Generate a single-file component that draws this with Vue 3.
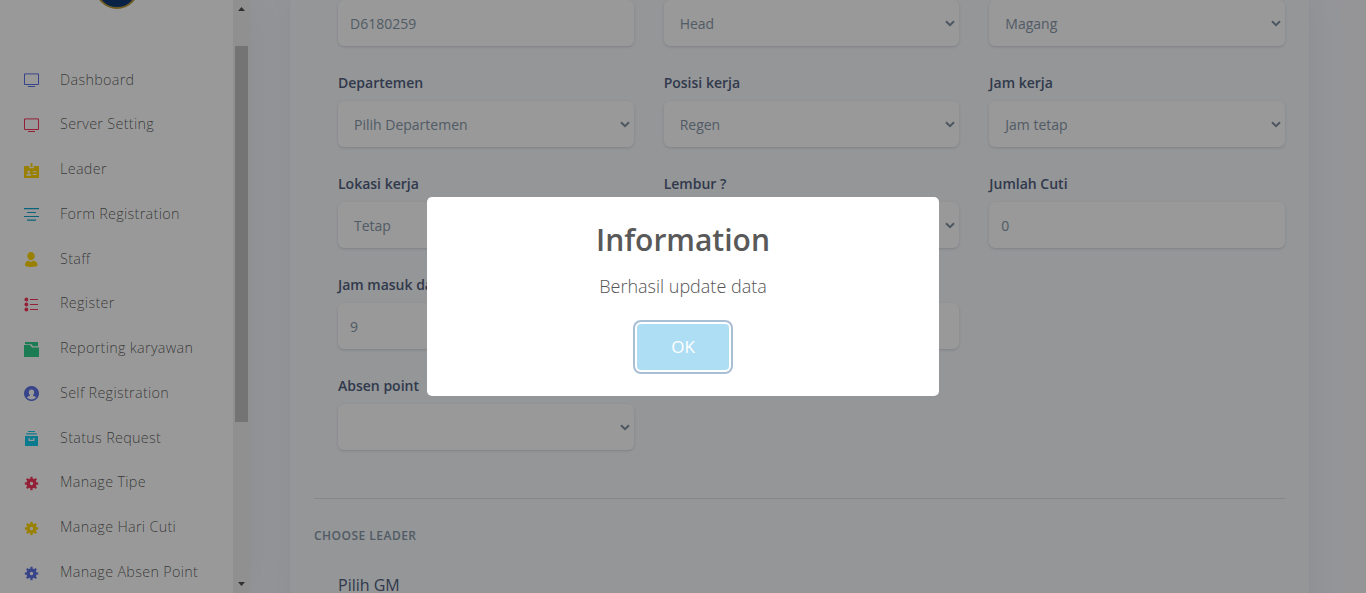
<script setup>
const menu = [
  { label: 'Dashboard', icon: 'tv', color: '#5e72e4' },
  { label: 'Server Setting', icon: 'tv', color: '#f5365c' },
  { label: 'Leader', icon: 'badge', color: '#ffd600' },
  { label: 'Form Registration', icon: 'lines', color: '#11a4cf' },
  { label: 'Staff', icon: 'person', color: '#ffd600' },
  { label: 'Register', icon: 'bullets', color: '#f5365c' },
  { label: 'Reporting karyawan', icon: 'folder', color: '#2dce89' },
  { label: 'Self Registration', icon: 'user', color: '#5e72e4' },
  { label: 'Status Request', icon: 'archive', color: '#11cdef' },
  { label: 'Manage Tipe', icon: 'gear', color: '#f5365c' },
  { label: 'Manage Hari Cuti', icon: 'gear', color: '#ffd600' },
  { label: 'Manage Absen Point', icon: 'gear', color: '#5e72e4' },
]

const rows = [
  [
    { label: '', value: 'D6180259' },
    { label: '', value: 'Head', select: true },
    { label: '', value: 'Magang', select: true },
  ],
  [
    { label: 'Departemen', value: 'Pilih Departemen', select: true },
    { label: 'Posisi kerja', value: 'Regen', select: true },
    { label: 'Jam kerja', value: 'Jam tetap', select: true },
  ],
  [
    { label: 'Lokasi kerja', value: 'Tetap', select: true },
    { label: 'Lembur ?', value: '', select: true },
    { label: 'Jumlah Cuti', value: '0' },
  ],
  [
    { label: 'Jam masuk dan', value: '9' },
    { label: '', value: '' },
  ],
  [{ label: 'Absen point', value: '', select: true }],
]
</script>

<template>
  <div class="page">
    <aside class="sidebar">
      <div class="side-main">
        <div class="brand"><div class="logo"></div></div>
        <nav class="nav">
          <a v-for="item in menu" :key="item.label" class="nav-link">
            <svg class="icon" width="15" height="15" viewBox="0 0 15 15" :style="{ color: item.color }">
              <g v-if="item.icon === 'tv'">
                <path d="M.5 .9h14v10.6H.5z" fill="none" stroke="currentColor" />
                <path d="M4 13.5h7" stroke="currentColor" />
              </g>
              <path v-else-if="item.icon === 'badge'" fill="currentColor" fill-rule="evenodd"
                d="M6.6 0h1.8v4H6.6zM0 3h5.3v2.2h4.4V3H15v12H0zM4.8 7.6a1.3 1.3 0 1 0 .01 0zM2.3 12.7h5c0-1.4-.9-2-2.5-2s-2.5.6-2.5 2zM8.6 8.2v1.1h4V8.2zM8.6 11v1.1h4V11z" />
              <path v-else-if="item.icon === 'lines'" d="M0 1.7h15M3 5.5h9M0 9.5h15M3 13.2h9" stroke="currentColor" stroke-width="1.2" />
              <path v-else-if="item.icon === 'person'" fill="currentColor"
                d="M7 0a3.7 4 0 0 1 3.7 4.1C10.7 6.6 9 8.2 7 8.2S3.3 6.6 3.3 4.1A3.7 4 0 0 1 7 0zM1 13c0-2.7 1.6-4 3.7-4.2L7 9.9l2.3-1.1c2.1.2 4.2 1.5 4.2 4.2 0 1.2-2 2-6.400 2S1 14.2 1 13z" />
              <g v-else-if="item.icon === 'bullets'" fill="currentColor">
                <circle cx="2.4" cy="2.5" r="1.9" /><circle cx="2.4" cy="7.5" r="1.9" /><circle cx="2.4" cy="12.5" r="1.9" />
                <path d="M6 2h8v1H6zM6 7h8v1H6zM6 12h8v1H6z" />
              </g>
              <path v-else-if="item.icon === 'folder'" fill="currentColor"
                d="M1 0h13v4.2H9L7.5 2.2H1zM0 3h6l2 2.6h7V15H0z" />
              <path v-else-if="item.icon === 'user'" fill="currentColor" fill-rule="evenodd"
                d="M7.5 0a7.5 7.5 0 1 0 .01 0zM7.5 3.5A2.7 2.9 0 0 1 10.2 6.4c0 1.2-.5 2-1.2 2.6v.8c1.4.3 2.4.8 3 1.7-1.1 1.3-2.7 2-4.5 2s-3.4-.7-4.5-2c.6-.9 1.6-1.4 3-1.7V9C5.3 8.4 4.8 7.6 4.8 6.4A2.7 2.9 0 0 1 7.5 3.5z" />
              <path v-else-if="item.icon === 'archive'" fill="currentColor" fill-rule="evenodd"
                d="M4 0h7v1.1H4zM2.2 2.3h10.6v1.2H2.2zM1 5h13v10H1zM4.5 7v3h6V7H9.3v1.700H5.7V7z" />
              <g v-else>
                <circle cx="7.5" cy="7.5" r="3.4" fill="none" stroke="currentColor" stroke-width="3.4" />
                <path v-for="n in 8" :key="n" d="M6.4 .8h2.2v3H6.4z" fill="currentColor" :transform="`rotate(${n * 45} 7.5 7.5)`" />
              </g>
            </svg>
            <span>{{ item.label }}</span>
          </a>
        </nav>
      </div>
      <div class="scrollbar">
        <svg width="7" height="4" viewBox="0 0 7 4"><path d="M0 4 3.5 0 7 4z" fill="#505050" /></svg>
        <div class="track"><div class="thumb"></div></div>
        <svg width="7" height="4" viewBox="0 0 7 4"><path d="M0 0 3.5 4 7 0z" fill="#505050" /></svg>
      </div>
    </aside>

    <main class="content">
      <section class="card">
        <div class="form">
          <div v-for="(row, r) in rows" :key="r" class="row">
            <div v-for="(field, f) in row" :key="f" class="field">
              <label v-if="r > 0">{{ field.label }}</label>
              <div class="control" :class="{ select: field.select }">
                <span>{{ field.value }}</span>
                <svg v-if="field.select" width="10" height="7" viewBox="0 0 10 7">
                  <path d="M1 1.2 5 5.2 9 1.2" fill="none" stroke="currentColor" stroke-width="2" />
                </svg>
              </div>
            </div>
          </div>
        </div>
        <hr />
        <h6>CHOOSE LEADER</h6>
        <div class="gm">Pilih GM</div>
      </section>
    </main>

    <div class="backdrop">
      <div class="modal">
        <h2>Information</h2>
        <p>Berhasil update data</p>
        <button>OK</button>
      </div>
    </div>
  </div>
</template>

<style>
body { margin: 0; overflow: hidden; }
</style>

<style scoped>
.page {
  position: relative;
  display: flex;
  width: 1366px;
  height: 593px;
  overflow: hidden;
  background: #f8f9fe;
  font-family: "Open Sans", sans-serif;
  box-sizing: border-box;
}
.page * { box-sizing: border-box; }
.sidebar {
  display: flex;
  flex: none;
  width: 250px;
  height: 593px;
  background: #fff;
  box-shadow: 0 0 32px rgba(136, 152, 170, .15);
  z-index: 1;
}
.side-main { width: 233px; overflow: hidden; }
.brand { display: flex; height: 56.72px; }
.logo {
  width: 44px;
  height: 44px;
  margin: -35px 0 0 95px;
  border: 2px solid #b8983a;
  border-radius: 50%;
  background: #103a74;
}
.nav-link {
  display: flex;
  align-items: center;
  height: 44.78px;
  padding-left: 24px;
  font-size: 14.4px;
  font-weight: 300;
  letter-spacing: .3px;
  color: rgba(0, 0, 0, .65);
  white-space: nowrap;
}
.icon { flex: none; margin: 3px 21px 0 0; }
.scrollbar {
  display: flex;
  flex-direction: column;
  align-items: center;
  width: 17px;
  padding: 7px 0;
  background: #f1f1f1;
}
.track { flex: 1; width: 13px; }
.thumb { height: 376px; margin-top: 35px; background: #c1c1c1; }
.content { flex: 1; padding: 0 57px 0 40px; }
.card {
  height: 620px;
  padding: 0 24px;
  background: #f7fafc;
  box-shadow: 0 0 32px rgba(136, 152, 170, .15), 0 0 1px rgba(50, 50, 93, .08);
}
.form { padding-left: 24px; height: 498px; }
.row {
  display: grid;
  grid-template-columns: repeat(3, 1fr);
  column-gap: 30px;
  height: 101px;
  align-items: end;
}
.row:first-child { height: 46px; }
.field label {
  display: block;
  height: 29px;
  font-size: 14px;
  font-weight: 600;
  line-height: 21px;
  color: #525f7f;
  white-space: nowrap;
}
.control {
  display: flex;
  align-items: center;
  justify-content: space-between;
  height: 46px;
  padding: 0 4px 0 12px;
  border-radius: 6px;
  background: #fff;
  box-shadow: 0 1px 3px rgba(50, 50, 93, .15), 0 1px 0 rgba(0, 0, 0, .02);
  font-size: 14px;
  color: #8898aa;
}
.control.select { padding-left: 16px; }
.control svg { color: #8090a2; }
hr { height: 1px; margin: 0; border: 0; background: #dfe2e4; }
h6 {
  margin: 28px 0 0;
  font-size: 12px;
  line-height: 18px;
  font-weight: 600;
  letter-spacing: .48px;
  color: #8898aa;
}
.gm { margin: 28px 0 0 24px; font-size: 16px; line-height: 24px; color: #525f7f; }
.backdrop {
  position: absolute;
  inset: 0;
  z-index: 2;
  display: flex;
  align-items: center;
  justify-content: center;
  background: rgba(0, 0, 0, .4);
}
.modal {
  display: flex;
  flex-direction: column;
  align-items: center;
  width: 512px;
  height: 199px;
  border-radius: 5px;
  background: #fff;
}
.modal h2 { margin: 20px 0 0; font-size: 30px; line-height: 45px; font-weight: 600; color: #595959; }
.modal p { margin: 11px 0 0; font-size: 18px; line-height: 27px; font-weight: 300; color: #545454; }
.modal button {
  width: 92px;
  height: 46px;
  margin-top: 24px;
  padding: 0 0 2px;
  border: 0;
  border-radius: 4px;
  background: #addef4;
  box-shadow: 0 0 0 2px #fff, 0 0 0 4px #a9bfd6;
  color: #fff;
  font: 500 17px "Open Sans", sans-serif;
}
</style>
